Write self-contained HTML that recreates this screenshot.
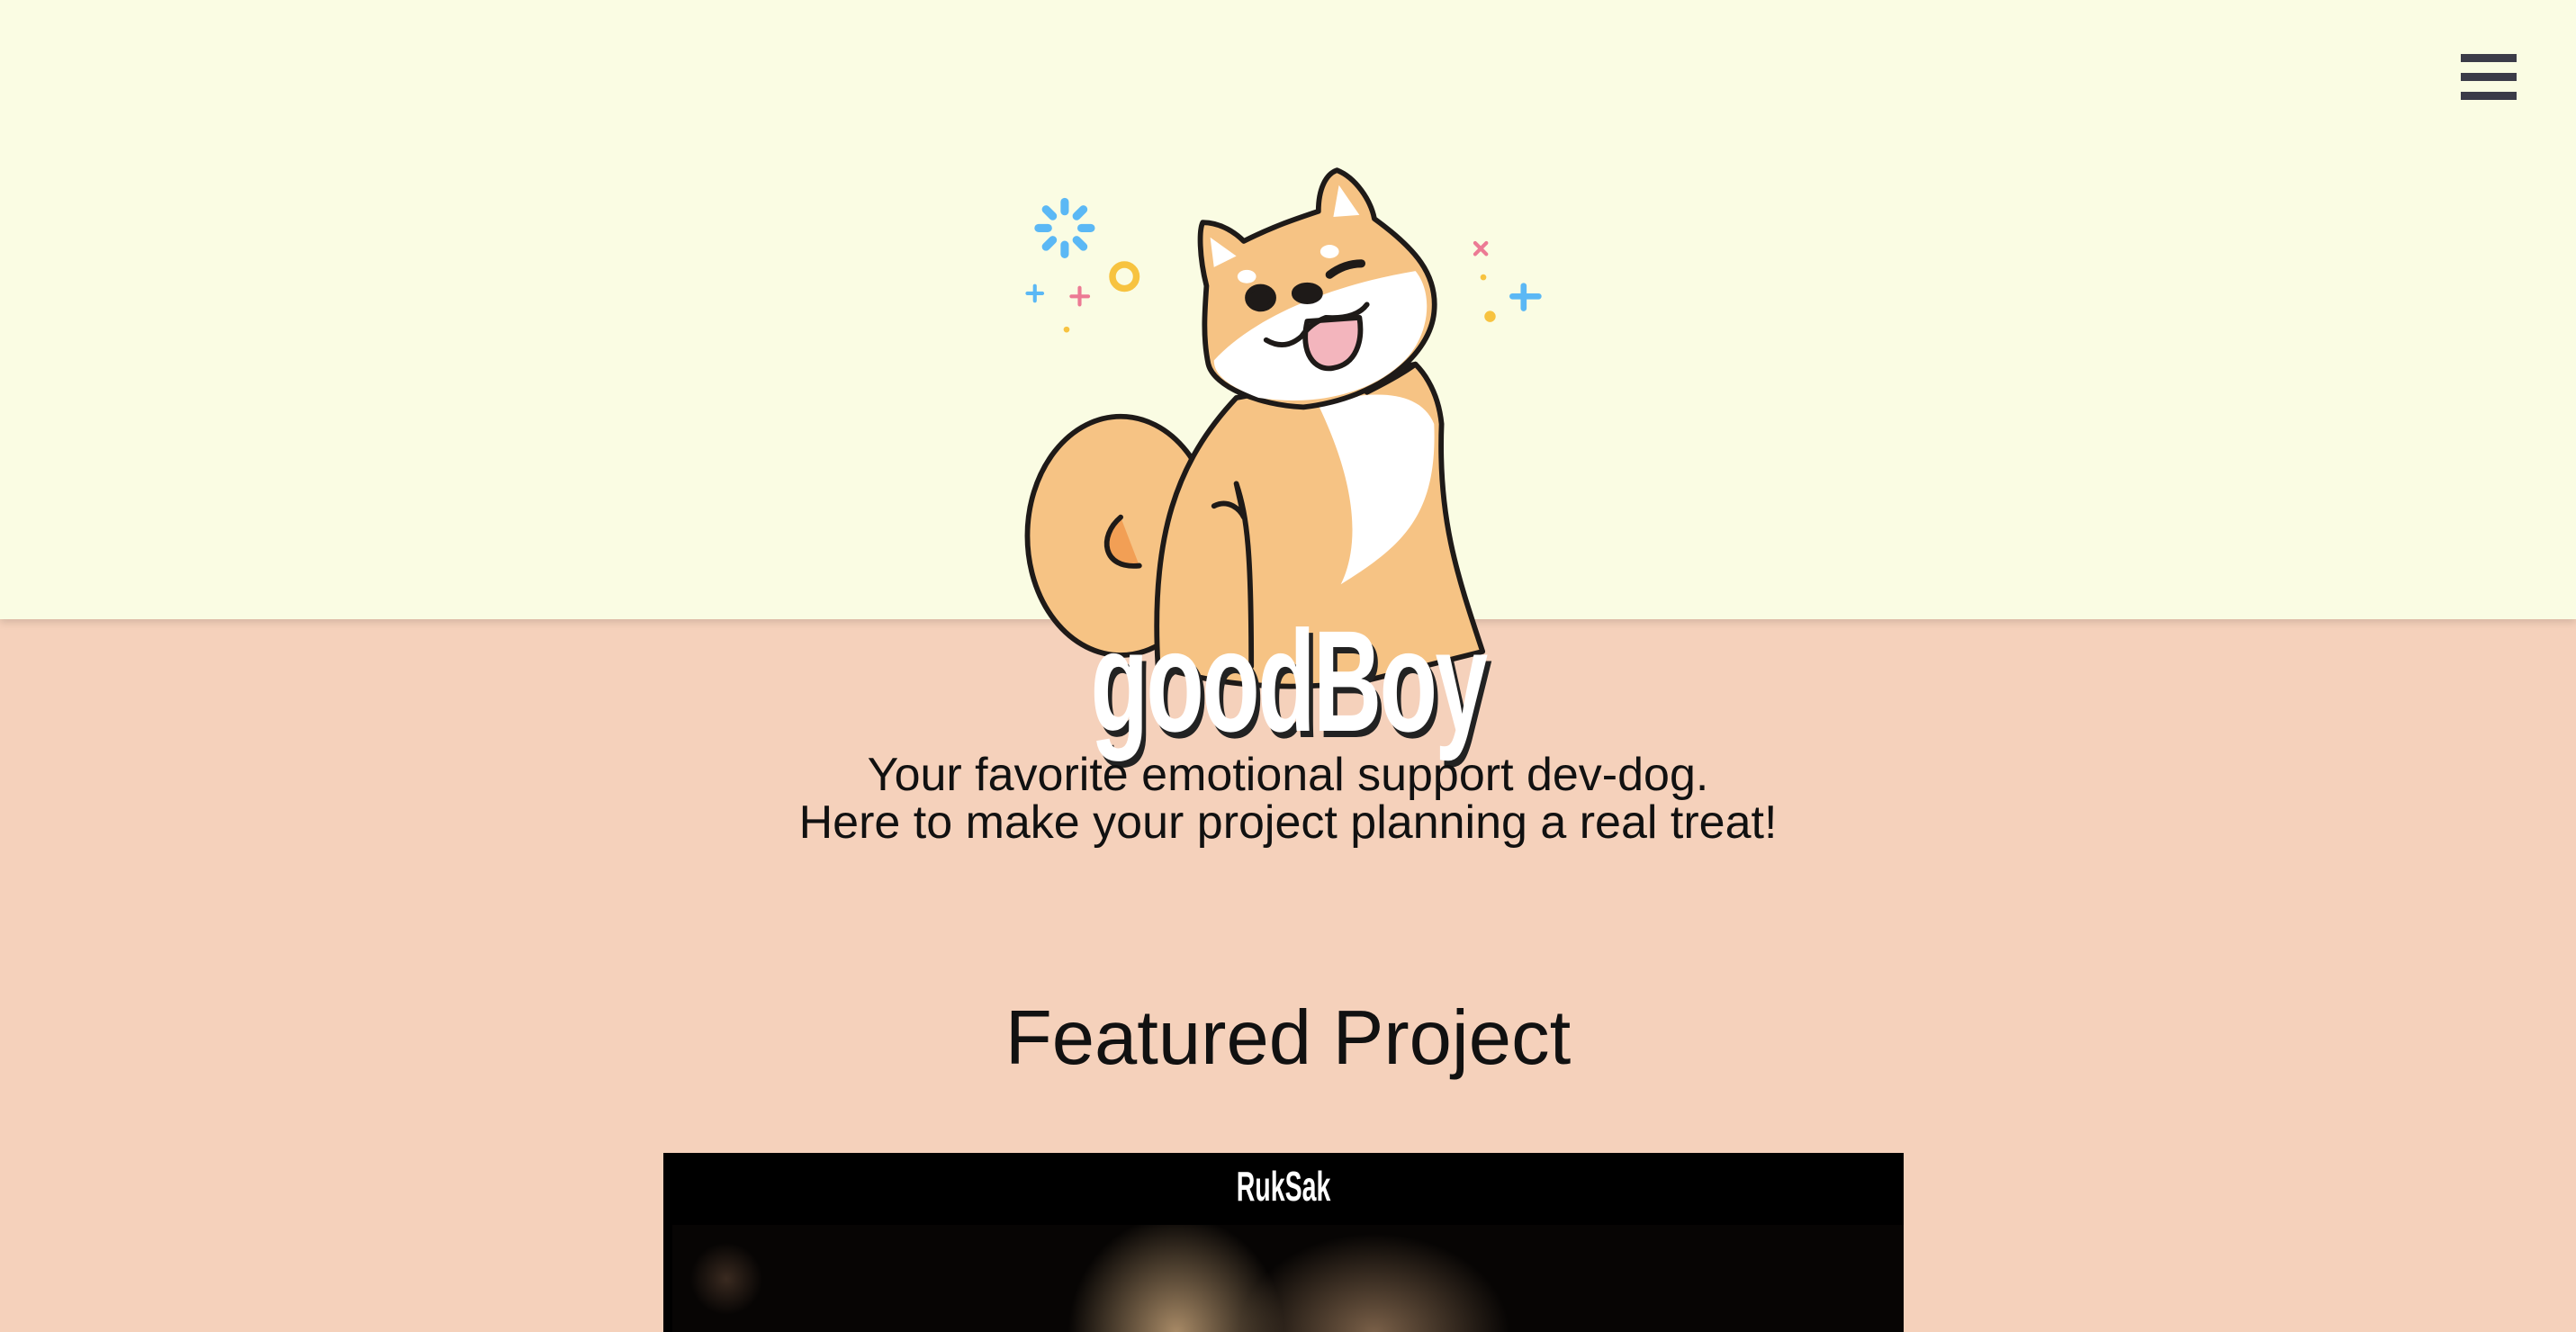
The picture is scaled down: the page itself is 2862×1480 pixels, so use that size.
<!DOCTYPE html>
<html><head><meta charset="utf-8"><style>
*{margin:0;padding:0;box-sizing:border-box}
html,body{width:2862px;height:1480px;overflow:hidden;font-family:"Liberation Sans",sans-serif}
body{background:#f5d1bb;position:relative}
.top{position:absolute;left:0;top:0;width:2862px;height:688px;background:#fafce3;box-shadow:0 4px 8px rgba(0,0,0,.12)}
.ham{position:absolute;left:2734px;top:60px;width:62px}
.ham div{height:9px;background:#3b3b48;margin-bottom:12px}
svg.dog{position:absolute;left:1100px;top:160px;width:650px;height:700px}
.brand{position:absolute;left:0;width:2862px;top:665px;text-align:center;font-size:160px;font-weight:bold;color:#fff;text-shadow:7px 7px 0 #222;transform:scaleX(.66);letter-spacing:-4px}
.sub{position:absolute;left:0;width:2862px;top:835px;text-align:center;font-size:52px;line-height:53px;color:#111}
.feat{position:absolute;left:0;width:2862px;top:1105px;text-align:center;font-size:85px;color:#111}
.card{position:absolute;left:737px;top:1281px;width:1378px;height:210px;background:#000}
.card .t{position:absolute;left:0;width:100%;top:10px;text-align:center;color:#fff;font-size:46px;font-weight:bold;transform:scaleX(.62)}
.card .img{position:absolute;left:10px;top:80px;width:1368px;height:130px;background:radial-gradient(ellipse 120px 130px at 560px 120px,#a88a66,transparent),radial-gradient(ellipse 150px 110px at 780px 120px,#7a6048,transparent),radial-gradient(ellipse 40px 40px at 60px 60px,#3a2a20,transparent),#070504}
</style></head><body>
<div class="top"></div>
<div class="ham"><div></div><div></div><div></div></div>
<svg class="dog" viewBox="0 0 1568 1688">
<g stroke="#1e1a18" stroke-width="14" stroke-linecap="round" stroke-linejoin="round">
<ellipse cx="350" cy="1050" rx="250" ry="320" fill="#f6c384"/>
<path d="M350 1000 C290 1050 300 1140 400 1130" fill="#f29f55"/>
<path d="M660 680 C500 850 430 1050 450 1400 Q700 1480 1000 1440 L1320 1360 C1250 1150 1200 1000 1210 750 C1200 650 1150 600 1140 590 Z" fill="#f6c384"/>
<path d="M880 700 C1000 950 980 1100 940 1180 C1100 1080 1200 1000 1190 750 C1150 650 1000 660 880 700 Z" fill="#fff" stroke="none"/>
<path d="M600 970 C640 950 670 980 680 1000 L660 910 C690 1000 700 1100 700 1400" fill="none"/>
<path d="M580 380 C560 300 560 230 570 210 C620 210 660 240 680 260 C760 220 820 200 880 180 C880 120 900 80 930 70 C980 90 1020 150 1030 200 C1140 280 1200 350 1190 450 C1180 560 1050 680 840 705 C720 700 600 650 585 590 C570 520 575 450 580 380 Z" fill="#f6c384"/>
<path d="M600 580 C700 470 900 380 1140 340 C1190 400 1180 520 1100 590 C1000 680 850 700 720 680 C640 650 600 620 600 580Z" fill="#fff" stroke="none"/>
<path d="M600 330 L590 250 L660 300 Z" fill="#fff" stroke="none"/>
<path d="M920 195 L935 110 L990 190 Z" fill="#fff" stroke="none"/>
<ellipse cx="725" cy="412" rx="35" ry="30" fill="#1e1a18"/>
<ellipse cx="850" cy="400" rx="35" ry="22" fill="#1e1a18"/>
<path d="M910 350 Q950 320 995 320" fill="none" stroke-width="22"/>
<path d="M850 475 C830 560 870 610 920 600 C980 590 1000 530 990 465 Z" fill="#f3b5bd"/>
<path d="M740 525 Q790 555 835 515 Q860 480 900 465 Q980 470 1010 430" fill="none"/>
<path d="M1010 665 Q1100 620 1140 590" fill="none"/>
</g>
<ellipse cx="910" cy="288" rx="25" ry="18" fill="#fff"/>
<ellipse cx="688" cy="355" rx="25" ry="18" fill="#fff"/>
<g stroke="#5bb8f5" stroke-width="22" stroke-linecap="round">
<path d="M200 225 m0 -45 l0 -25 M200 225 m0 45 l0 25 M200 225 m45 0 l25 0 M200 225 m-45 0 l-25 0 M200 225 m32 -32 l18 -18 M200 225 m-32 32 l-18 18 M200 225 m32 32 l18 18 M200 225 m-32 -32 l-18 -18"/>
<path d="M1430 380 v60 M1400 408 h70" stroke-width="16"/>
<path d="M120 380 v40 M100 400 h40" stroke-width="10"/>
</g>
<circle cx="360" cy="355" r="32" fill="none" stroke="#f7c340" stroke-width="18"/>
<circle cx="1340" cy="462" r="15" fill="#f7c340"/><circle cx="205" cy="497" r="8" fill="#f7c340"/><circle cx="1322" cy="357" r="8" fill="#f7c340"/>
<g stroke="#ec7a94" stroke-width="10" stroke-linecap="round"><path d="M240 385 v45 M218 408 h45 M1300 265 l30 30 M1330 265 l-30 30"/></g>
</svg>
<div class="brand">goodBoy</div>
<div class="sub">Your favorite emotional support dev-dog.<br>Here to make your project planning a real treat!</div>
<div class="feat">Featured Project</div>
<div class="card"><div class="t">RukSak</div><div class="img"></div></div>
</body></html>
